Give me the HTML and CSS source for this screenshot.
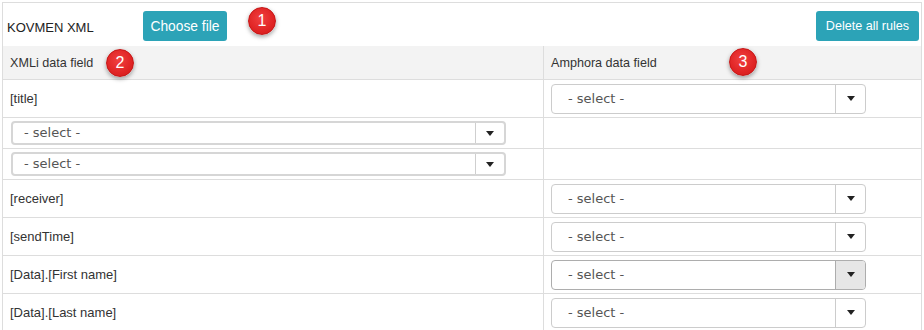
FILE: index.html
```html
<!DOCTYPE HTML>
<html>
<head>
<meta http-equiv="Content-Type" content="text/html; charset=utf-8">
<title>XML mapping</title>
<link rel="stylesheet" href="styles.css">
</head>

<body>
<div class="mapper">
	<!-- 顶部：文件名和按钮 -->
	<div class="mapper-bar">
		<span class="mapper-title">KOVMEN XML</span>
		<button class="btn btn-file" type="button">Choose file</button>
		<button class="btn btn-clear" type="button">Delete all rules</button>
	</div>
	<!-- 字段对应表 -->
	<table class="rules">
		<tr class="rules-hd">
			<th class="col-src">XMLi data field</th>
			<th>Amphora data field</th>
		</tr>
		<tr class="row-tall">
			<td class="col-src">[title]</td>
			<td><div class="pick"><span class="pick-text">- select -</span><span class="pick-btn"><i class="caret"></i></span></div></td>
		</tr>
		<tr class="row-short">
			<td class="col-src"><div class="pick pick-wide"><span class="pick-text">- select -</span><span class="pick-btn"><i class="caret"></i></span></div></td>
			<td></td>
		</tr>
		<tr class="row-short">
			<td class="col-src"><div class="pick pick-wide"><span class="pick-text">- select -</span><span class="pick-btn"><i class="caret"></i></span></div></td>
			<td></td>
		</tr>
		<tr class="row-tall">
			<td class="col-src">[receiver]</td>
			<td><div class="pick"><span class="pick-text">- select -</span><span class="pick-btn"><i class="caret"></i></span></div></td>
		</tr>
		<tr class="row-tall">
			<td class="col-src">[sendTime]</td>
			<td><div class="pick"><span class="pick-text">- select -</span><span class="pick-btn"><i class="caret"></i></span></div></td>
		</tr>
		<tr class="row-tall">
			<td class="col-src">[Data].[First name]</td>
			<td><div class="pick pick-hover"><span class="pick-text">- select -</span><span class="pick-btn"><i class="caret"></i></span></div></td>
		</tr>
		<tr class="row-tall">
			<td class="col-src">[Data].[Last name]</td>
			<td><div class="pick"><span class="pick-text">- select -</span><span class="pick-btn"><i class="caret"></i></span></div></td>
		</tr>
	</table>
	<!-- 标注 -->
	<span class="badge badge-1">1</span>
	<span class="badge badge-2">2</span>
	<span class="badge badge-3">3</span>
</div>
</body>
</html>
```

FILE: styles.css
```css
html,body{margin:0;padding:0;background:#fff;}
body{font-family:"Liberation Sans",Arial,sans-serif;font-size:13px;color:#333;}

.mapper{position:relative;margin:2px 2px 0 2px;border:1px solid #ddd;border-bottom:0;}
.mapper-bar{display:flex;align-items:flex-start;height:43px;box-sizing:border-box;padding:8px 2px 0 4px;}
.mapper-title{width:136px;padding-top:2px;line-height:30px;font-size:13px;color:#222;}

.btn{height:30px;padding:0;border:0;border-radius:3px;background:#2ca3b7;color:#fff;font-family:"Liberation Sans",Arial,sans-serif;font-size:13px;cursor:pointer;}
.btn-file{width:84px;font-size:13.8px;}
.btn-clear{margin-left:auto;width:103px;font-size:12.6px;}

.rules{width:100%;border-collapse:separate;border-spacing:0;table-layout:fixed;}
.rules th,
.rules td{box-sizing:border-box;padding:0 7px;border-bottom:1px solid #ddd;text-align:left;vertical-align:middle;font-weight:normal;}
.rules .col-src{width:541px;border-right:1px solid #ddd;}
.rules-hd th{height:34px;background:#f3f3f3;font-size:12.6px;color:#333;}
.rules .row-tall td{height:38px;}
.rules .row-short td{height:31px;}

/* 下拉框 */
.pick{display:flex;width:315px;height:30px;box-sizing:border-box;border:1px solid #ccc;border-radius:4px;background:#fff;}
.pick-text{flex:1;padding-left:16px;line-height:28px;font-family:"DejaVu Sans",Verdana,sans-serif;font-size:13px;color:#555;white-space:nowrap;}
.pick-btn{width:30px;box-sizing:border-box;border-left:1px solid #ccc;border-radius:0 3px 3px 0;display:flex;align-items:center;justify-content:center;}
.caret{display:block;width:0;height:0;border-top:5px solid #222;border-left:4px solid transparent;border-right:4px solid transparent;}

.pick-wide{width:495px;height:24px;margin-left:1px;border:2px solid #d6d6d6;}
.pick-wide .pick-text{padding-left:11px;line-height:20px;}
.pick-wide .pick-btn{width:29px;border-left-color:#cfcfcf;}

.pick-hover{border-color:#adadad;}
.pick-hover .pick-btn{background:#e6e6e6;border-left-color:#adadad;}

/* 红色数字标注 */
.badge{position:absolute;width:28px;height:28px;box-sizing:border-box;border:1px solid #c41515;border-radius:50%;background:radial-gradient(circle at 45% 40%,#f04040 0%,#e02424 60%,#cf1a1a 100%);box-shadow:0 2px 4px rgba(0,0,0,.35);color:#fff;font-family:"Liberation Sans",Arial,sans-serif;font-size:16px;line-height:26px;text-align:center;}
.badge-1{left:245px;top:4px;}
.badge-2{left:103px;top:46px;}
.badge-3{left:726px;top:45px;}
```
